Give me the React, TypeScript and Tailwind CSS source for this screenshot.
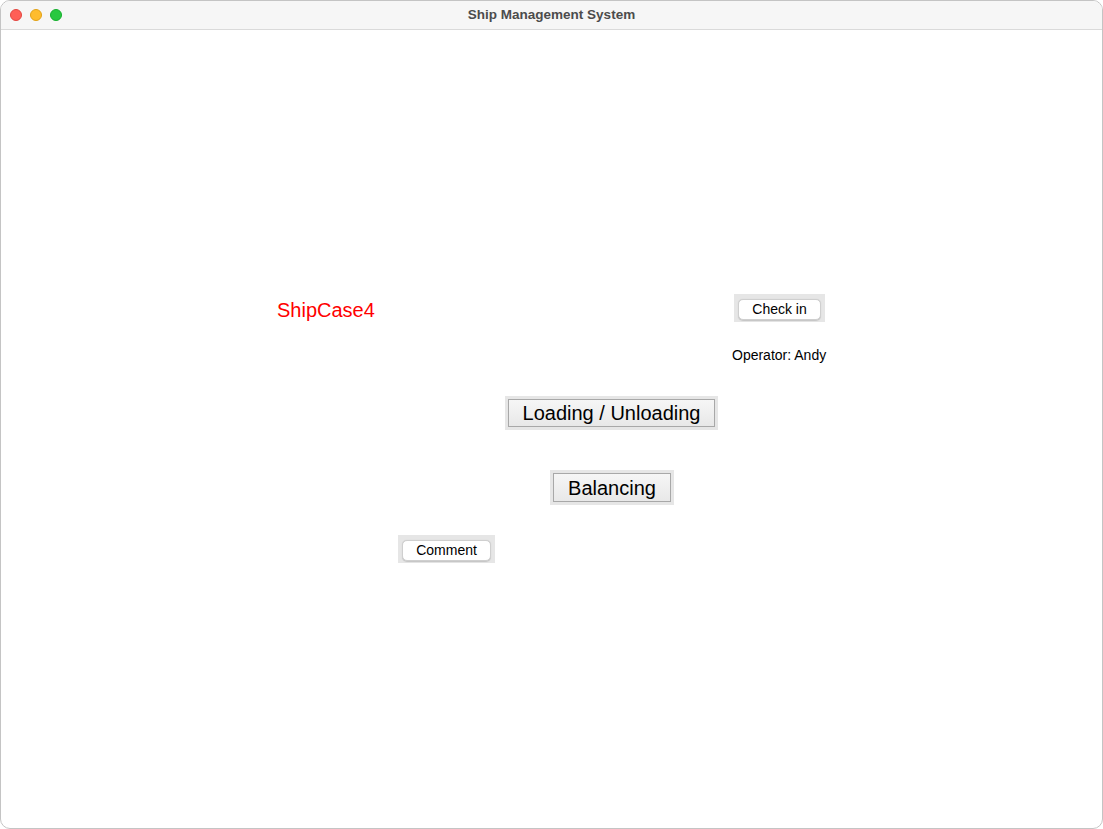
const FONT = "font-['Liberation_Sans',Arial,sans-serif]";

function TrafficLights() {
  return (
    <div className="flex items-center gap-[8px] pl-[9px]">
      <span className="h-[12px] w-[12px] rounded-full border border-[#e2463f] bg-[#ff5f57]" />
      <span className="h-[12px] w-[12px] rounded-full border border-[#e1a116] bg-[#febc2e]" />
      <span className="h-[12px] w-[12px] rounded-full border border-[#14ae2c] bg-[#28c840]" />
    </div>
  );
}

type SmallButtonProps = { label: string; width: string };

// rounded aqua-style push button sitting in its grey highlight frame
function SmallButton({ label, width }: SmallButtonProps) {
  return (
    <div className={`flex h-[28px] ${width} bg-[#e6e6e6] px-[4px] pt-[5px] pb-[2px]`}>
      <button
        className="flex flex-1 items-center justify-center rounded-[5px] border border-[#cfcfcf] bg-white pb-[2px] text-[14px] leading-none text-black shadow-[0_0.5px_1px_rgba(0,0,0,0.15)]"
        type="button"
      >
        {label}
      </button>
    </div>
  );
}

type BigButtonProps = { label: string; width: string; height: string };

function BigButton({ label, width, height }: BigButtonProps) {
  return (
    <div className={`flex ${height} ${width} bg-[#e6e6e6] p-[3px]`}>
      <button
        className="flex flex-1 items-center justify-center border border-[#a8a8a8] bg-gradient-to-b from-[#f6f6f6] to-[#e8e8e8] text-[20px] leading-none text-black"
        type="button"
      >
        {label}
      </button>
    </div>
  );
}

export default function App() {
  return (
    <div className={`h-[829px] w-[1103px] overflow-hidden bg-white ${FONT}`}>
      <div className="flex h-full flex-col overflow-hidden rounded-[10px] border border-[#c4c4c4] bg-white">
        <div className="relative flex h-[29px] shrink-0 items-center border-b border-[#dadada] bg-[#f6f6f6]">
          <TrafficLights />
          <div className="absolute inset-x-0 top-0 flex h-full items-center justify-center text-[13.5px] font-bold text-[#4c4c4c]">
            Ship Management System
          </div>
        </div>

        <div className="flex flex-1 flex-col">
          <div className="mt-[264px] flex items-start">
            <div className="ml-[276px] mt-[5px] w-[457px] text-[20px] leading-[23px] text-[#ff0000]">
              ShipCase4
            </div>
            <SmallButton label="Check in" width="w-[91px]" />
          </div>

          <div className="ml-[731px] mt-[25px] text-[14px] leading-[16px] text-black">
            Operator: Andy
          </div>

          <div className="ml-[504px] mt-[33px] flex">
            <BigButton label="Loading / Unloading" width="w-[213px]" height="h-[34px]" />
          </div>

          <div className="ml-[549px] mt-[40px] flex">
            <BigButton label="Balancing" width="w-[124px]" height="h-[35px]" />
          </div>

          <div className="ml-[397px] mt-[30px] flex">
            <SmallButton label="Comment" width="w-[97px]" />
          </div>
        </div>
      </div>
    </div>
  );
}
